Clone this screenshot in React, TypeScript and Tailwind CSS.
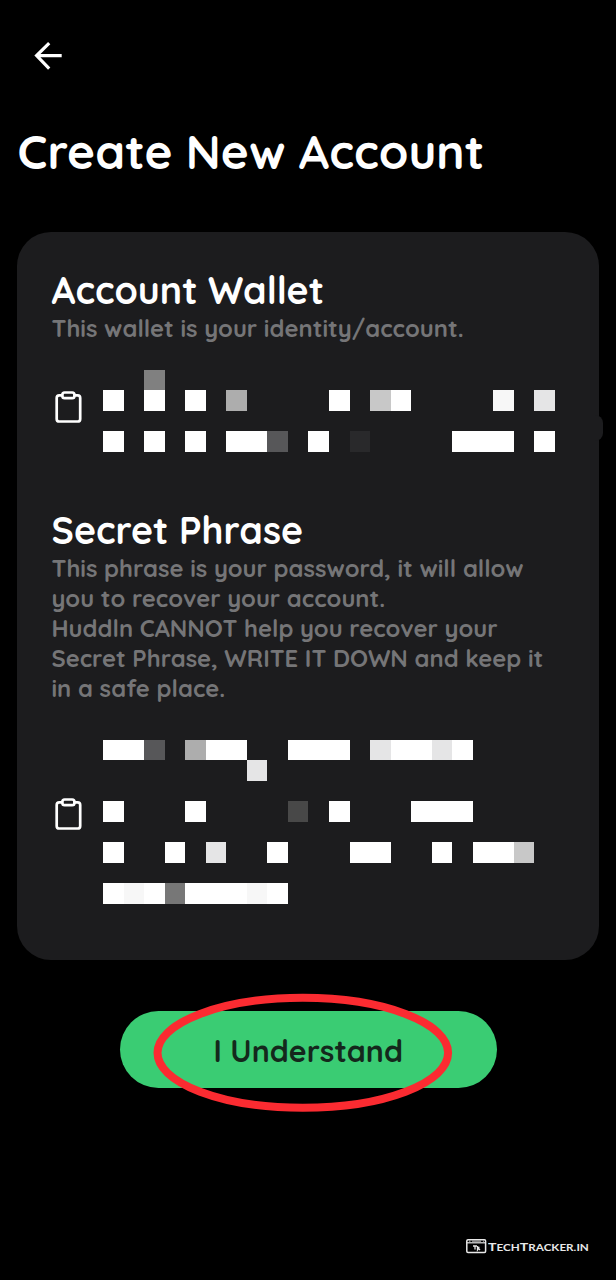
const shades: Record<string, string> = {
  W: 'bg-white',
  f: 'bg-[#f7f7f7]',
  e: 'bg-[#e5e5e6]',
  c: 'bg-[#c8c8c8]',
  b: 'bg-[#adadad]',
  g: 'bg-[#808080]',
  h: 'bg-[#777777]',
  d: 'bg-[#575759]',
  k: 'bg-[#484848]',
  n: 'bg-[#29292b]',
  '.': '',
};

const walletRows = [
  '..g...................',
  'W.W.W.b....W.cW....f.e',
  '......................',
  'W.W.W.WWd.W.n....WWW.W',
];

const phraseRows = [
  'WWd.bWW..WWW.eWWeW....',
  '.......e..............',
  '......................',
  'W...W....k.W...WWW....',
  '......................',
  'W..W.e..W...WW..W.WWc.',
  '......................',
  'WfWhWWWfW.............',
];

function Mosaic({ rows }: { rows: string[] }) {
  return (
    <div className="grid auto-rows-[20.54px] grid-cols-[repeat(22,20.56px)]">
      {rows.join('').split('').map((cell, i) => (
        <span key={i} className={shades[cell]} />
      ))}
    </div>
  );
}

function Clipboard() {
  return (
    <svg className="block h-[34px] w-7" viewBox="0 0 28 34" fill="none" stroke="#fff" strokeWidth="2.7" strokeLinejoin="round">
      <path d="M8.7 5.3H5.3A2.6 2.6 0 0 0 2.7 7.9V28.9a2.6 2.6 0 0 0 2.6 2.6H23.6a2.6 2.6 0 0 0 2.6-2.6V7.9a2.6 2.6 0 0 0-2.6-2.6H20.2" />
      <rect x="8.4" y="2.5" width="12" height="5.7" rx="2.2" />
    </svg>
  );
}

export default function App() {
  return (
    <main className="flex h-[1280px] w-[616px] flex-col overflow-hidden bg-black font-['Quicksand','Lato',sans-serif] font-bold text-white">
      <header className="pt-[41px] pl-[34px]">
        <svg className="block h-[30px] w-[29px]" viewBox="0 0 29 30" fill="none" stroke="#fff" strokeWidth="3.2">
          <path d="M27.7 14.6H3M15.2 2.2L2.6 14.6L15.2 27.6" />
        </svg>
      </header>
      <h1 className="mt-[50px] ml-[17.6px] h-[61px] text-[47.6px] leading-[60px] whitespace-nowrap">Create New Account</h1>

      <section className="relative mt-[50px] ml-[17px] h-[728px] w-[582px] rounded-[34px] bg-[#1c1c1e] pt-[37px] pl-[34px]">
        <span className="absolute top-[183px] -right-[4px] h-[26px] w-2 rounded-r-full bg-[#1c1c1e]" />
        <h2 className="ml-[0.5px] h-[43px] text-[37.5px] leading-[42px] whitespace-nowrap">Account Wallet</h2>
        <p className="ml-[0.5px] h-[30px] pt-px text-[23.8px] leading-[30px] whitespace-nowrap text-[#757577]">This wallet is your identity/account.</p>
        <div className="mt-[27.6px] flex">
          <div className="mt-[20.4px] ml-[3px] w-[49px]"><Clipboard /></div>
          <Mosaic rows={walletRows} />
        </div>

        <h2 className="mt-[57.2px] ml-[0.5px] h-[43px] text-[37.5px] leading-[42px] whitespace-nowrap">Secret Phrase</h2>
        <div className="ml-[0.5px] flex h-[150px] flex-col items-start pt-px text-[23.8px] leading-[30px] whitespace-nowrap text-[#757577]">
          <p>This phrase is your password, it will allow</p>
          <p>you to recover your account.</p>
          <p>Huddln CANNOT help you recover your</p>
          <p>Secret Phrase, WRITE IT DOWN and keep it</p>
          <p>in a safe place.</p>
        </div>
        <div className="mt-[37.8px] flex">
          <div className="mt-[57.5px] ml-[3px] w-[49px]"><Clipboard /></div>
          <Mosaic rows={phraseRows} />
        </div>
      </section>

      <div className="relative mt-[51px] ml-[120px] h-[77px] w-[376.5px]">
        <button className="flex h-full w-full items-center justify-center rounded-full bg-[#3acc73] pt-[5px] text-[30.3px] whitespace-nowrap text-[#14281c]">
          I Understand
        </button>
        <svg className="absolute -top-[18px] left-[33px] h-[120px] w-[300px]" viewBox="0 0 300 120" fill="none">
          <ellipse cx="149.8" cy="59.8" rx="145.3" ry="55" stroke="#fb2b31" strokeWidth="8" />
        </svg>
      </div>

      <footer className="mt-[149px] ml-[466px] flex items-center">
        <svg className="block h-[15px] w-[21px]" viewBox="0 0 21 15" fill="none" stroke="#e8e8e8">
          <rect x=".8" y=".8" width="18.8" height="12.6" rx="1.2" strokeWidth="1.5" />
          <path d="M1 3.8H19.5" strokeWidth="1.2" />
          <path d="M3 2.2h1.5M6 2.2h9M17 2.2h1" strokeWidth=".8" />
          <path d="M7 7h4M9 7v3.5M11.5 7v4l1-1.5l1.5 1.5M11.5 8.5h2" strokeWidth="1.3" />
        </svg>
        <span className="ml-px inline-block origin-left scale-x-[1.23] pt-[2px] text-[11.5px] leading-[15px] whitespace-nowrap text-[#e8e8e8] font-['Lato',sans-serif]">
          T<span className="text-[9.5px]">ECH</span>T<span className="text-[9.5px]">RACKER.IN</span>
        </span>
      </footer>
    </main>
  );
}
